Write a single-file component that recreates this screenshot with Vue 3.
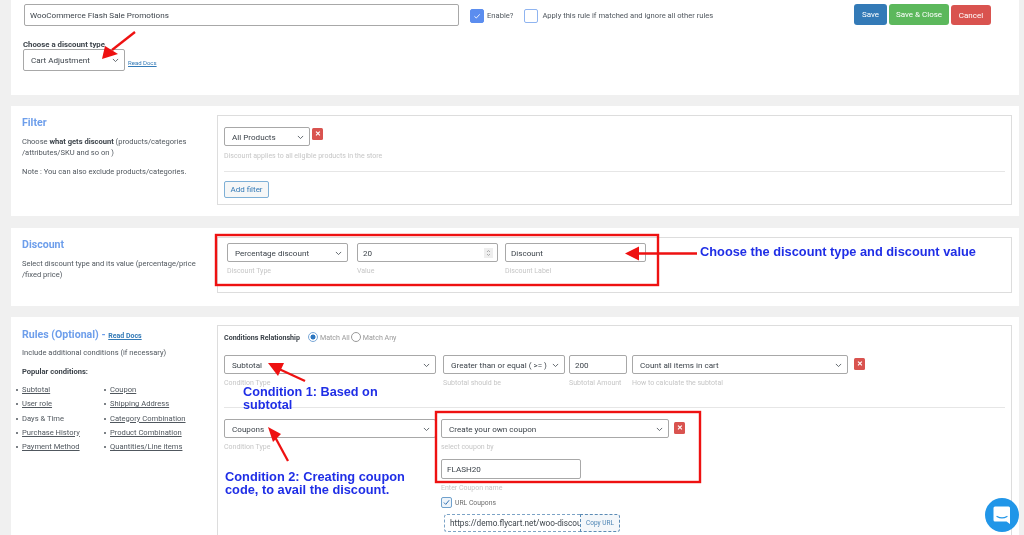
<script setup>
const col1 = [
  { t: 'Subtotal', u: true }, { t: 'User role', u: true }, { t: 'Days & Time', u: false },
  { t: 'Purchase History', u: true }, { t: 'Payment Method', u: true },
]
const col2 = ['Coupon', 'Shipping Address', 'Category Combination', 'Product Combination', 'Quantities/Line items']
</script>

<template>
  <div class="page">
    <section class="card c1">
      <div class="top">
        <div class="field title-input">WooCommerce Flash Sale Promotions</div>
        <span class="check on"><svg viewBox="0 0 14 14"><path d="M4 7.4l2.2 2L10.2 5" fill="none" stroke="#fff" stroke-width="1"/></svg></span>
        <span class="check-label enable">Enable?</span>
        <span class="check"></span>
        <span class="check-label apply">Apply this rule if matched and ignore all other rules</span>
        <div class="buttons">
          <button class="btn save">Save</button>
          <button class="btn close">Save &amp; Close</button>
          <button class="btn cancel">Cancel</button>
        </div>
      </div>
      <div class="type-label">Choose a discount type</div>
      <div class="type-row">
        <div class="field select w-type">Cart Adjustment<svg class="chev" viewBox="0 0 8 5"><path d="M1 1l3 3 3-3" /></svg></div>
        <a class="docs">Read Docs</a>
      </div>
    </section>

    <section class="card c2">
      <div class="side">
        <h2>Filter</h2>
        <p>Choose <b>what gets discount</b> (products/categories<br>/attributes/SKU and so on )</p>
        <p>Note : You can also exclude products/categories.</p>
      </div>
      <div class="panel p2">
        <div class="row">
          <div class="field select w-all">All Products<svg class="chev" viewBox="0 0 8 5"><path d="M1 1l3 3 3-3" /></svg></div>
          <span class="x">✕</span>
        </div>
        <div class="hint h-all">Discount applies to all eligible products in the store</div>
        <hr>
        <button class="add">Add filter</button>
      </div>
    </section>

    <section class="card c3">
      <div class="side">
        <h2>Discount</h2>
        <p>Select discount type and its value (percentage/price<br>/fixed price)</p>
      </div>
      <div class="panel p3">
        <div class="stack s-pct">
          <div class="field select">Percentage discount<svg class="chev" viewBox="0 0 8 5"><path d="M1 1l3 3 3-3" /></svg></div>
          <div class="hint">Discount Type</div>
        </div>
        <div class="stack s-val">
          <div class="field num">20<span class="spin"><svg viewBox="0 0 6 10"><path d="M1.5 4L3 2.500l1.500 1.500M1.500 6L3 7.500 4.500 6" fill="none" stroke="#999" stroke-width=".8"/></svg></span></div>
          <div class="hint">Value</div>
        </div>
        <div class="stack s-lab">
          <div class="field">Discount</div>
          <div class="hint">Discount Label</div>
        </div>
      </div>
    </section>

    <section class="card c4">
      <div class="side rules">
        <h2>Rules (Optional) - <a class="docs bold">Read Docs</a></h2>
        <p>Include additional conditions (if necessary)</p>
        <p class="popular"><b>Popular conditions:</b></p>
        <div class="lists">
          <ul class="l1"><li v-for="i in col1" :key="i.t" :class="{ u: i.u }"><span>{{ i.t }}</span></li></ul>
          <ul class="l2"><li v-for="t in col2" :key="t" class="u"><span>{{ t }}</span></li></ul>
        </div>
      </div>
      <div class="panel p4">
        <div class="rel">
          <b>Conditions Relationship</b>
          <span class="radio on"></span><span class="rlabel">Match All</span>
          <span class="radio"></span><span class="rlabel">Match Any</span>
        </div>
        <div class="cond c-one">
          <div class="stack s-type">
            <div class="field select">Subtotal<svg class="chev" viewBox="0 0 8 5"><path d="M1 1l3 3 3-3" /></svg></div>
            <div class="hint">Condition Type</div>
          </div>
          <div class="stack s-op">
            <div class="field select">Greater than or equal ( &gt;= )<svg class="chev" viewBox="0 0 8 5"><path d="M1 1l3 3 3-3" /></svg></div>
            <div class="hint">Subtotal should be</div>
          </div>
          <div class="stack s-amt">
            <div class="field">200</div>
            <div class="hint">Subtotal Amount</div>
          </div>
          <div class="stack s-how">
            <div class="field select">Count all items in cart<svg class="chev" viewBox="0 0 8 5"><path d="M1 1l3 3 3-3" /></svg></div>
            <div class="hint">How to calculate the subtotal</div>
          </div>
          <span class="x x-row">✕</span>
        </div>
        <hr class="h4">
        <div class="cond">
          <div class="stack s-type">
            <div class="field select">Coupons<svg class="chev" viewBox="0 0 8 5"><path d="M1 1l3 3 3-3" /></svg></div>
            <div class="hint">Condition Type</div>
          </div>
          <div class="stack s-coupon">
            <div class="field select">Create your own coupon<svg class="chev" viewBox="0 0 8 5"><path d="M1 1l3 3 3-3" /></svg></div>
            <div class="hint">select coupon by</div>
            <div class="field flash">FLASH20</div>
            <div class="hint">Enter Coupon name</div>
            <div class="url-check">
              <span class="mini"><svg viewBox="0 0 12 12"><path d="M2.500 6l2.500 2.500L9.500 3" fill="none" stroke="#2f6fb0" stroke-width="1.300"/></svg></span>
              <span>URL Coupons</span>
            </div>
            <div class="url-row">
              <span class="url">https://demo.flycart.net/woo-discount</span>
              <span class="copy">Copy URL</span>
            </div>
          </div>
          <span class="x x-row x-c">✕</span>
        </div>
      </div>
    </section>

    <svg class="marks" width="1024" height="535" viewBox="0 0 1024 535">
      <g fill="none" stroke="#ee1111" stroke-width="2.400">
        <rect x="216" y="235" width="442" height="50" />
        <rect x="436" y="412" width="264" height="70" />
      </g>
      <g stroke="#ee1111" fill="none" stroke-width="2.300">
        <path d="M135 32L112 50" />
        <path d="M697 253.500H636" />
        <path d="M305 381L279 369" />
        <path d="M288 461L275 437" />
      </g>
      <g fill="#ee1111">
        <path d="M102 59L105 46 118 54z" />
        <path d="M625 253.500L639 246.500V260.500z" />
        <path d="M268 363L284 363 278 376z" />
        <path d="M268 427L281 434 273 442z" />
      </g>
    </svg>

    <div class="note n1">Choose the discount type and discount value</div>
    <div class="note n2">Condition 1: Based on<br>subtotal</div>
    <div class="note n3">Condition 2: Creating coupon<br>code, to avail the discount.</div>

    <div class="chat">
      <svg viewBox="0 0 20 20" width="20" height="20">
        <path d="M3 1.500h13.500a1.500 1.500 0 0 1 1.500 1.500v16l-3.500-2.500H3a1.500 1.500 0 0 1-1.500-1.500V3A1.500 1.500 0 0 1 3 1.500z" fill="#fff"/>
        <path d="M5 11.500c3 1.700 7 1.700 10 0" fill="none" stroke="#2196e8" stroke-width="1.200" stroke-linecap="round"/>
      </svg>
    </div>
  </div>
</template>

<style>
html, body { margin: 0; background: #f0f0f0; overflow: hidden; }
</style>

<style scoped>
.page {
  position: relative;
  width: 1024px;
  height: 535px;
  overflow: hidden;
  background: #f0f0f0;
  padding: 0 5px 0 11px;
  box-sizing: border-box;
  font-family: Roboto, "Noto Sans", sans-serif;
  font-size: 8px;
  color: #50575e;
  filter: blur(0.4px);
}
.card { background: #fff; display: flex; box-sizing: border-box; }
.c1 { height: 95px; display: block; padding: 5px 0 0 12px; margin-bottom: 11px; }
.c2 { height: 110px; margin-bottom: 12px; padding: 9px 7px 0 11px; }
.c3 { height: 78px; margin-bottom: 11px; padding: 9px 7px 0 11px; }
.c4 { height: 218px; padding: 8px 7px 0 11px; }

.top { display: flex; align-items: center; height: 21px; }
.field {
  box-sizing: border-box;
  height: 19px;
  border: 1px solid #a8a8a8;
  border-radius: 2px;
  background: #fff;
  display: flex;
  align-items: center;
  padding-left: 7px;
  font-size: 8.100px;
  color: #3c434a;
  white-space: nowrap;
  position: relative;
  overflow: hidden;
}
.select { padding-right: 12px; }
.chev { position: absolute; right: 5px; top: 50%; margin-top: -2px; width: 7px; height: 4.500px; fill: none; stroke: #50575e; stroke-width: 1; }
.title-input { width: 435px; height: 22px; margin: -1px 0 0 1px; padding-left: 5px; }
.check {
  box-sizing: border-box;
  width: 14px; height: 14px; margin-left: 11px;
  border: 1px solid #8fb4f0; border-radius: 2px; background: #fff; flex: none;
}
.check.on { background: #5b8def; border-color: #5b8def; }
.check svg { display: block; width: 12px; height: 12px; }
.check-label { font-size: 7.600px; flex: none; }
.enable { margin-left: 3px; }
.apply { margin-left: 4px; width: 312px; }
.buttons { position: absolute; left: 854px; top: 4px; display: flex; gap: 2px; align-items: flex-start; }
.btn {
  border: none; border-radius: 3px; color: #fff;
  font: 8px Roboto, "Noto Sans", sans-serif;
  height: 21px; padding: 0; display: block;
}
.save { width: 33px; background: #337ab7; }
.close { width: 60px; background: #5cb85c; }
.cancel { width: 40px; height: 20px; background: #d9534f; margin-top: 1px; }
.type-label { font-weight: 700; font-size: 7.800px; color: #3c434a; margin-top: 14px; line-height: 9px; }
.type-row { display: flex; align-items: flex-end; }
.w-type { width: 102px; height: 22px; }
.docs { font-size: 6px; color: #337ab7; text-decoration: underline; margin: 0 0 5px 3px; }

.side { width: 195px; flex: none; padding-top: 1px; }
.side h2 { font-size: 10.600px; line-height: 14px; margin: 0 0 6px; font-weight: 700; color: #6d9eeb; }
.side p { margin: 0 0 8px; font-size: 7.560px; line-height: 11px; color: #50575e; }
.side .docs.bold { font-size: 7px; font-weight: 700; margin: 0; }
.side b { color: #3c434a; }
.side.rules { padding-top: 3px; }
.side.rules h2 { margin-bottom: 4px; }

.panel { flex: 1; box-sizing: border-box; border: 1px solid #ddd; }
.row { display: flex; align-items: flex-start; }
.p2 { height: 90px; padding: 11px 6px 0 6px; }
.w-all { width: 86px; }
.x {
  width: 11px; height: 12px; margin: 1px 0 0 2px; flex: none;
  border-radius: 1.500px; background: #d9534f; color: #fff;
  font-size: 7px; font-weight: 700; line-height: 12px; text-align: center;
}
.hint { font-size: 7px; line-height: 9px; color: #c6c6c6; white-space: nowrap; }
.h-all { margin-top: 6px; }
hr { border: none; border-top: 1px solid #e6e6e6; margin: 10px 0 9px; }
.add {
  display: block; width: 45px; height: 17px; box-sizing: border-box; padding: 0;
  border: 1px solid #7fb0d6; border-radius: 2px; background: #f6f7f7; color: #337ab7;
  font: 8px Roboto, "Noto Sans", sans-serif;
}

.p3 { height: 56px; display: flex; padding: 5px 0 0 9px; }
.stack { display: flex; flex-direction: column; flex: none; }
.stack .hint { margin-top: 5px; }
.s-pct { width: 121px; margin-right: 9px; }
.s-val { width: 141px; margin-right: 7px; }
.s-lab { width: 141px; }
.s-lab .field { padding-left: 5px; }
.num { padding-left: 5px; }
.spin { position: absolute; right: 4px; top: 4px; width: 9px; height: 10px; background: #eee; }
.spin svg { display: block; width: 9px; height: 10px; }

.p4 { height: 240px; padding: 0 6px; }
.rel { display: flex; align-items: center; height: 22px; font-size: 7.100px; }
.rel b { color: #3c434a; margin-right: 8px; }
.radio {
  box-sizing: border-box; width: 10px; height: 10px; border-radius: 50%;
  border: 1px solid #9a9a9a; background: #fff; flex: none;
}
.radio.on { border-color: #7aa8d8; background: radial-gradient(circle, #2f77c0 0 2.200px, #fff 2.800px); }
.rlabel { color: #9a9a9a; margin: 0 1px 0 2px; font-size: 7.100px; }
.cond { display: flex; align-items: flex-start; }
.c-one { margin-top: 7px; }
.s-type { width: 212px; margin-right: 5px; }
.s-op { width: 122px; margin: 0 4px 0 2px; }
.s-amt { width: 58px; margin-right: 5px; }
.s-how { width: 216px; }
.s-amt .field { padding-left: 5px; }
.x-row { margin: 3px 0 0 6px; }
.x-c { margin-left: 5px; }
.h4 { margin: 19px 0 11px; }
.s-coupon { width: 228px; }
.s-coupon .hint + .flash { margin-top: 7px; }
.flash { width: 140px; height: 20px; padding-left: 5px; }
.url-check { display: flex; align-items: center; gap: 3px; margin-top: 4px; font-size: 6.800px; color: #6c6c6c; }
.mini {
  box-sizing: border-box; width: 11px; height: 11px;
  border: 1px solid #6fa0cc; border-radius: 2px; background: #eef4fa;
}
.mini svg { display: block; width: 9px; height: 9px; }
.url-row { display: flex; height: 18px; margin: 6px 0 0 3px; }
.url {
  box-sizing: border-box; width: 136px; overflow: hidden; white-space: nowrap;
  border: 1px dashed #7ca3c6; border-right: none; border-radius: 3px 0 0 3px;
  line-height: 16px; padding-left: 5px; font-size: 8.200px; color: #3c434a;
}
.copy {
  box-sizing: border-box; width: 40px; border: 1px dashed #5b8bb5; border-radius: 0 3px 3px 0;
  line-height: 16px; text-align: center; font-size: 6.500px; color: #4f86b5; background: #f4f7fa;
}

.lists { display: flex; margin-left: -6px; }
.lists ul { list-style: none; margin: 0; padding: 0; font-size: 7.600px; line-height: 14.300px; }
.l1 { width: 88px; }
.lists li { position: relative; padding-left: 6px; white-space: nowrap; }
.lists li::before {
  content: ""; position: absolute; left: 0; top: 6px;
  width: 2px; height: 2px; border-radius: 50%; background: #50575e;
}
.lists li.u span { text-decoration: underline; }
.side .popular { margin: 8px 0 6px; }

.marks { position: absolute; left: 0; top: 0; pointer-events: none; }
.note {
  position: absolute; font-family: "Liberation Sans", Arial, sans-serif;
  font-weight: 700; color: #1f2ee6; white-space: nowrap;
}
.n1 { left: 700px; top: 244px; font-size: 12.800px; line-height: 15px; }
.n2 { left: 243px; top: 386px; font-size: 12.700px; line-height: 13px; }
.n3 { left: 225px; top: 470px; font-size: 12.800px; line-height: 13px; }
.chat {
  position: absolute; left: 985px; top: 498px; width: 34px; height: 34px; border-radius: 50%;
  background: #2196e8; display: flex; align-items: center; justify-content: center;
}
</style>
